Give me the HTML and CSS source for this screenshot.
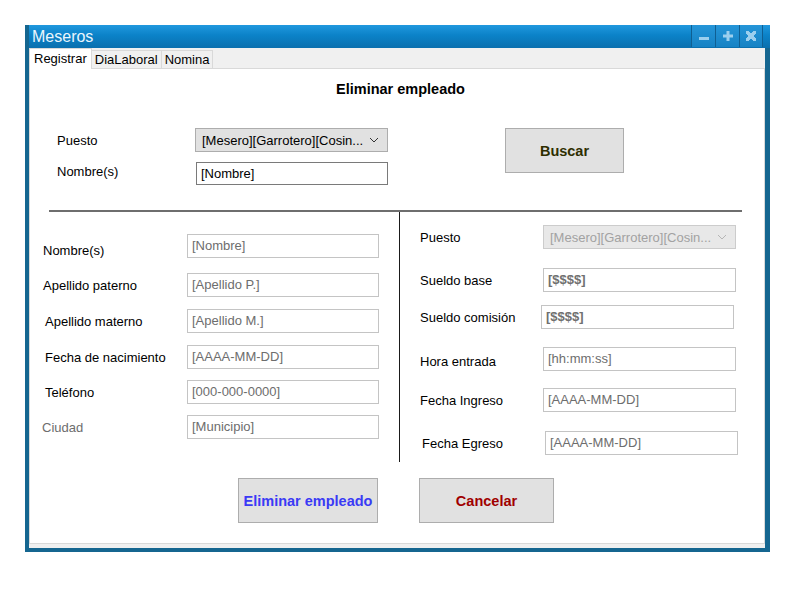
FILE: index.html
```html
<!DOCTYPE html>
<html lang="es">
<head>
<meta charset="utf-8">
<title>Meseros</title>
<link rel="stylesheet" href="styles.css">
</head>
<body>
<div class="window">
  <div class="titlebar">
    <span class="title">Meseros</span>
    <div class="controls">
      <div class="ctl"><svg width="12" height="12" viewBox="0 0 12 12"><rect x="1" y="7" width="10" height="3" fill="#9ccfee"/></svg></div>
      <div class="ctl"><svg width="12" height="12" viewBox="0 0 12 12"><rect x="1" y="4.5" width="10" height="3" fill="#9ccfee"/><rect x="4.5" y="1" width="3" height="10" fill="#9ccfee"/></svg></div>
      <div class="ctl"><svg width="12" height="12" viewBox="0 0 12 12"><path d="M1 1h3v1h1v1h2v-1h1v-1h3v3h-1v1h-1v2h1v1h1v3h-3v-1h-1v-1h-2v1h-1v1h-3v-3h1v-1h1v-2h-1v-1h-1z" fill="#9ccfee"/></svg></div>
    </div>
  </div>
  <div class="frame-body">
    <div class="tabs">
      <div class="tab tab-active">Registrar</div>
      <div class="tab">DiaLaboral</div>
      <div class="tab">Nomina</div>
    </div>
    <div class="panel">
      <div class="heading">Eliminar empleado</div>
      <div class="search">
        <div class="search-fields">
          <div class="srow">
            <span class="slbl">Puesto</span>
            <div class="select"><span class="select-text">[Mesero][Garrotero][Cosin...</span><svg class="chev" width="10" height="6" viewBox="0 0 10 6"><path d="M1 1l4 4 4-4" fill="none" stroke="#333" stroke-width="1"/></svg></div>
          </div>
          <div class="srow">
            <span class="slbl slbl-up">Nombre(s)</span>
            <div class="field field-dark">[Nombre]</div>
          </div>
        </div>
        <div class="btn btn-buscar">Buscar</div>
      </div>
      <div class="divider"></div>
      <div class="details">
        <div class="col col-left">
          <div class="row"><span class="lbl lbl-low">Nombre(s)</span><div class="field">[Nombre]</div></div>
          <div class="row row-m4"><span class="lbl">Apellido paterno</span><div class="field">[Apellido P.]</div></div>
          <div class="row row-m1"><span class="lbl ind">Apellido materno</span><div class="field">[Apellido M.]</div></div>
          <div class="row row-m1"><span class="lbl ind">Fecha de nacimiento</span><div class="field">[AAAA-MM-DD]</div></div>
          <div class="row"><span class="lbl ind">Teléfono</span><div class="field">[000-000-0000]</div></div>
          <div class="row"><span class="lbl lbl-gray out">Ciudad</span><div class="field">[Municipio]</div></div>
        </div>
        <div class="col col-right">
          <div class="rrow"><span class="rlbl">Puesto</span><div class="select select-disabled"><span class="select-text">[Mesero][Garrotero][Cosin...</span><svg class="chev" width="10" height="6" viewBox="0 0 10 6"><path d="M1 1l4 4 4-4" fill="none" stroke="#b5b5b5" stroke-width="1"/></svg></div></div>
          <div class="rrow rrow-a"><span class="rlbl">Sueldo base</span><div class="field field-bold">[$$$$]</div></div>
          <div class="rrow rrow-b"><span class="rlbl">Sueldo comisión</span><div class="field field-bold shift-left">[$$$$]</div></div>
          <div class="rrow rrow-c"><span class="rlbl rlbl-low">Hora entrada</span><div class="field">[hh:mm:ss]</div></div>
          <div class="rrow rrow-d"><span class="rlbl">Fecha Ingreso</span><div class="field">[AAAA-MM-DD]</div></div>
          <div class="rrow rrow-a"><span class="rlbl rind">Fecha Egreso</span><div class="field">[AAAA-MM-DD]</div></div>
        </div>
      </div>
      <div class="actions">
        <div class="btn btn-eliminar">Eliminar empleado</div>
        <div class="btn btn-cancelar">Cancelar</div>
      </div>
    </div>
  </div>
</div>
</body>
</html>
```
FILE: styles.css
```css
* { box-sizing: border-box; }
html, body { margin: 0; padding: 0; background: #ffffff; }
body { font-family: "Liberation Sans", Arial, sans-serif; font-size: 13px; color: #000; }

.window {
  margin: 25px 0 0 25px;
  width: 745px;
  height: 527px;
  background: #156690;
  display: flex;
  flex-direction: column;
}
.titlebar {
  height: 23px;
  margin: 0 0 0 4px;
  background: linear-gradient(to bottom, #2098de 0%, #0b82c8 45%, #0a6fae 100%);
  display: flex;
  align-items: center;
  justify-content: space-between;
}
.title {
  color: #eaf6fd;
  font-size: 16px;
  padding-left: 3px;
  line-height: 23px;
}
.controls { display: flex; height: 22px; align-self: flex-start; margin-right: 7px; }
.ctl {
  width: 24px;
  height: 22px;
  background: linear-gradient(to bottom, #2595d8, #1682c4);
  border-left: 1px solid #0f5f92;
  display: flex;
  align-items: center;
  justify-content: center;
}
.ctl:last-child { border-right: 1px solid #0f5f92; }

.frame-body {
  flex: 1;
  margin: 0 5px 4px 4px;
  background: #f0f0f0;
  display: flex;
  flex-direction: column;
  padding-bottom: 4px;
}
.tabs { display: flex; align-items: flex-end; height: 20px; }
.tab {
  height: 18px;
  padding: 0 3px;
  border: 1px solid #d9d9d9;
  border-bottom: none;
  border-left: none;
  background: #f0f0f0;
  font-size: 13px;
  line-height: 17px;
  color: #000;
}
.tab-active {
  background: #fff;
  border-left: 1px solid #d9d9d9;
  padding: 0 4px;
  line-height: 19px;
  position: relative;
  z-index: 1;
  margin-bottom: -1px;
  height: 21px;
}
.panel {
  flex: 1;
  background: #fff;
  border: 1px solid #d9d9d9;
  padding-top: 11px;
}
.heading {
  font-weight: bold;
  font-size: 14.5px;
  line-height: 18px;
  text-align: center;
  padding-left: 7px;
}

.search { display: flex; margin-top: 30px; padding-left: 27px; align-items: flex-start; }
.search-fields { display: flex; flex-direction: column; gap: 9px; }
.srow { display: flex; align-items: center; height: 24px; }
.slbl { width: 138px; }
.slbl-up { margin-top: -3px; }
.select {
  width: 193px;
  height: 24px;
  background: #e1e1e1;
  border: 1px solid #adadad;
  display: flex;
  align-items: center;
  justify-content: space-between;
  padding: 0 8px 0 6px;
  font-size: 13px;
  color: #000;
}
.select-text { white-space: nowrap; overflow: hidden; }
.chev { flex: none; }
.select-disabled { background: #e8e8e8; border-color: #cccccc; color: #a2a2a2; }

.field {
  width: 192px;
  height: 24px;
  border: 1px solid #c4c4c4;
  padding-left: 4px;
  line-height: 22px;
  color: #6d6d6d;
  background: #fff;
  white-space: nowrap;
}
.field-dark { border-color: #7a7a7a; color: #000; margin-left: 1px; height: 23px; line-height: 21px; }
.field-bold { font-weight: bold; color: #707070; }

.btn {
  background: #e1e1e1;
  border: 1px solid #adadad;
  height: 45px;
  display: flex;
  align-items: center;
  justify-content: center;
  font-weight: bold;
  font-size: 14.5px;
}
.btn-buscar { width: 119px; margin-left: 117px; color: #2e2e00; }

.divider {
  margin: 25px 0 0 19px;
  width: 693px;
  height: 2px;
  background: #6e6e6e;
}

.details { display: flex; }
.col { display: flex; flex-direction: column; }
.col-left {
  width: 370px;
  height: 250px;
  border-right: 1px solid #1a1a1a;
  padding: 22px 0 0 13px;
  gap: 11px;
}
.row { display: flex; align-items: flex-start; height: 24px; }
.row-m4 { margin-top: 4px; }
.row-m1 { margin-top: 1px; }
.lbl { width: 144px; line-height: 24px; margin-top: 1px; }
.lbl-low { margin-top: 5px; }
.ind { padding-left: 2px; }
.out { margin-left: -1px; width: 145px; }
.lbl-gray { color: #6d6d6d; }

.col-right { padding: 13px 0 0 20px; }
.rrow { display: flex; align-items: flex-start; height: 24px; }
.rrow-a { margin-top: 19px; }
.rrow-b { margin-top: 13px; }
.rrow-c { margin-top: 18px; }
.rrow-d { margin-top: 17px; }
.rlbl { width: 123px; line-height: 24px; margin-top: 1px; }
.rlbl-low { margin-top: 3px; }
.rind { padding-left: 2px; width: 125px; }
.col-right .field, .col-right .select { width: 193px; }
.shift-left { margin-left: -2px; }

.actions { display: flex; gap: 41px; margin-top: 16px; padding-left: 208px; }
.btn-eliminar { width: 140px; color: #3a3af5; }
.btn-cancelar { width: 135px; color: #a00000; }
```
